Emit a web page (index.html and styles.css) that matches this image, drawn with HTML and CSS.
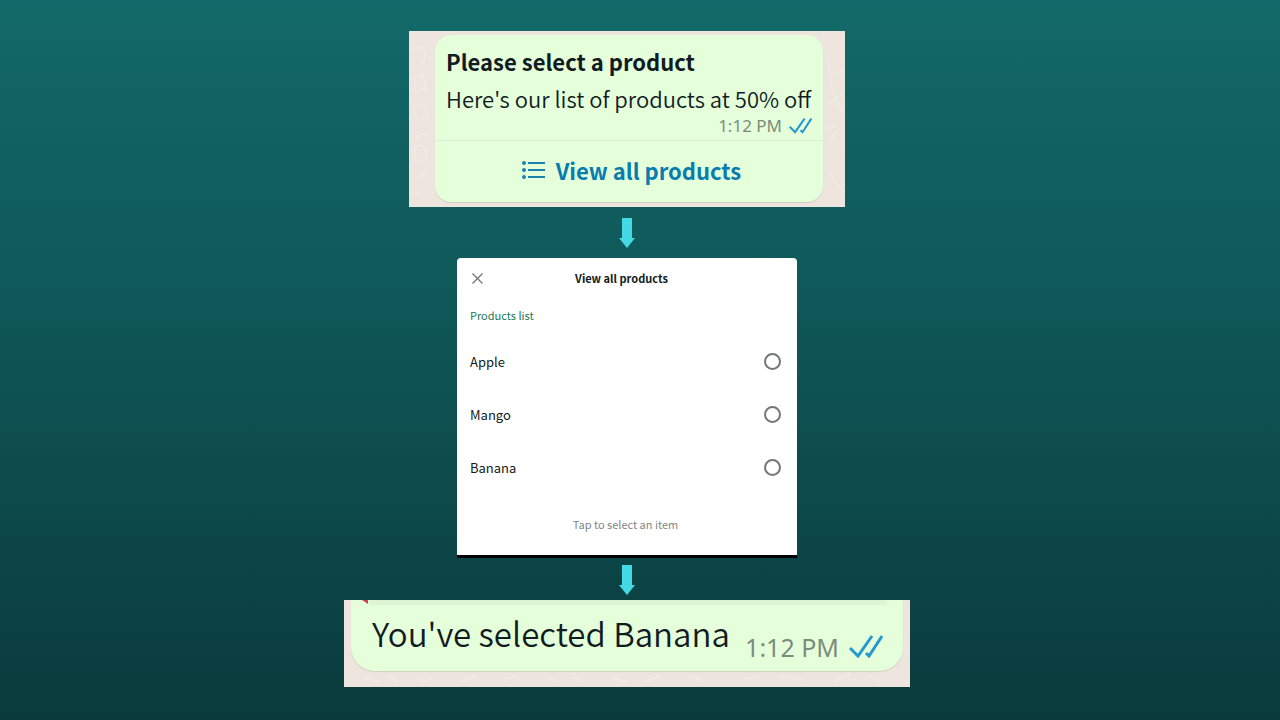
FILE: index.html
```html
<!DOCTYPE html>
<html lang="en">

<head>
  <meta charset="UTF-8">
  <meta name="viewport" content="width=device-width, initial-scale=1.0">
  <title>List message</title>
  <link rel="stylesheet" href="styles.css">
</head>

<body>
  <main class="flow">
    <!-- list message -->
    <section class="chat chat-list">
      <svg class="doodles" viewBox="0 0 436 176" aria-hidden="true">
        <path d="M3 20q8-8 12 0t-5 16M5 48l9-5 3 14-10 4zM4 78q8-9 14 0t-9 12zM6 106l12-4M5 118q7-9 12 2t-10 11zM6 148l12-5M4 160l8 6M418 24l5 34 10 22M423 44l10-4M420 72l12-8M417 98l12-5M418 138l16 22M420 112l8-12"/>
      </svg>
      <div class="bubble">
        <div class="bubble-body">
          <h1>Please select a product</h1>
          <p>Here's our list of products at 50% off</p>
          <div class="meta">
            <time>1:12 PM</time>
            <svg class="ticks" viewBox="0 0 34 23" aria-label="Read"><path d="M1 13l8 8L23 1M17 18l3 3L33 1"/></svg>
          </div>
        </div>
        <button class="view-all" type="button">
          <svg class="list-icon" viewBox="0 0 23 18" aria-hidden="true"><path d="M6 2h17M6 9h17M6 16h17"/><circle cx="2" cy="2" r="2"/><circle cx="2" cy="9" r="2"/><circle cx="2" cy="16" r="2"/></svg>
          View all products
        </button>
      </div>
    </section>

    <svg class="arrow" viewBox="0 0 16 30" aria-hidden="true"><path d="M3 0h10v20h3l-8 10-8-10h3z"/></svg>

    <!-- product picker -->
    <form class="sheet">
      <header>
        <button class="close" type="button" aria-label="Close">
          <svg viewBox="0 0 11 11"><path d="M.5.5l10 10M10.5.5l-10 10"/></svg>
        </button>
        <h2>View all products</h2>
      </header>
      <h3>Products list</h3>
      <label><span>Apple</span><input type="radio" name="product" value="apple"></label>
      <label><span>Mango</span><input type="radio" name="product" value="mango"></label>
      <label><span>Banana</span><input type="radio" name="product" value="banana"></label>
      <p class="hint">Tap to select an item</p>
    </form>

    <svg class="arrow" viewBox="0 0 16 30" aria-hidden="true"><path d="M3 0h10v20h3l-8 10-8-10h3z"/></svg>

    <!-- reply -->
    <section class="chat chat-reply">
      <svg class="doodles" viewBox="0 0 566 87" aria-hidden="true">
        <path d="M20 77l14 4M44 76l10 5M76 79q7 6 12-4M116 82l15-6M160 82q8-10 16-2M205 76l8 7M230 72l5 10M268 78l14 4M300 82l16-6M345 75l14 6M400 79l16-3M438 76l20 4M490 81l16-7M524 74l12 8"/>
      </svg>
      <div class="reply">
        <p>You've selected Banana</p>
        <div class="meta">
          <time>1:12 PM</time>
          <svg class="ticks" viewBox="0 0 34 23" aria-label="Read"><path d="M1 13l8 8L23 1M17 18l3 3L33 1"/></svg>
        </div>
      </div>
      <svg class="quote-corner" viewBox="0 0 6 4" aria-hidden="true"><path d="M0 0h6v4z"/></svg>
    </section>
  </main>
</body>

</html>
```
FILE: styles.css
```css
* {
  box-sizing: border-box;
}

body {
  margin: 0;
  min-height: 100vh;
  background: linear-gradient(#136969, #0f5657 45%, #0a3a3c);
  color: #111b21;
  font-family: "Noto Sans CJK SC", "Open Sans", sans-serif;
}

h1,
h2,
h3,
p {
  margin: 0;
}

button {
  border: 0;
  padding: 0;
  background: none;
  font-family: inherit;
  cursor: pointer;
}

svg {
  display: block;
}

.flow {
  display: flex;
  flex-direction: column;
  align-items: center;
  padding: 31px 26px 32px 0;
}

.chat {
  position: relative;
  max-width: 100%;
  background-color: #ede5de;
}

.chat-list {
  width: 436px;
  padding: 4px 22px 5px 26px;
}

.chat-reply {
  width: 566px;
  padding: 0 7px 16px;
}

.doodles {
  position: absolute;
  top: 0;
  left: 0;
  width: 100%;
  height: 100%;
  fill: none;
  stroke: #f5efea;
  stroke-width: 1;
}

.bubble,
.reply {
  position: relative;
  background-color: #e5ffdb;
  box-shadow: 0 1px 1px #cfd0c0;
}

.bubble {
  border-radius: 16px;
}

.bubble-body {
  padding: 8px 11px 4px;
  border-bottom: 1px solid #dcecdc;
}

.bubble h1 {
  font-size: 22px;
  line-height: 37px;
}

.bubble p {
  font-size: 22px;
  font-weight: 350;
  line-height: 36px;
  white-space: nowrap;
}

.meta {
  display: flex;
  align-items: center;
  justify-content: flex-end;
  color: #7c8c7c;
}

.meta time {
  font-family: "Noto Sans", sans-serif;
}

.bubble .meta {
  gap: 7px;
  font-size: 17px;
  line-height: 20px;
}

.ticks {
  width: 34px;
  fill: none;
  stroke: #2499d0;
  stroke-width: 3;
}

.bubble .ticks {
  width: 23px;
}

.view-all {
  display: flex;
  align-items: center;
  justify-content: center;
  gap: 11px;
  width: 100%;
  height: 61px;
  padding: 0 0 4px 5px;
  color: #087cad;
  font-size: 22px;
  font-weight: 700;
  line-height: 32px;
}

.list-icon {
  width: 23px;
  fill: #1a83b0;
}

.list-icon path {
  stroke: #1a83b0;
  stroke-width: 2;
}

.arrow {
  width: 16px;
  height: 30px;
  margin: 11px 0 10px;
  fill: #43d9e6;
}

.sheet {
  width: 340px;
  max-width: 100%;
  padding: 0 16px 15px 13px;
  border-bottom: 3px solid #000;
  border-radius: 4px 4px 0 0;
  background-color: #fff;
}

.sheet + .arrow {
  margin: 7px 0 5px;
}

.sheet header {
  display: grid;
  grid-template-columns: 16px 1fr 24px;
  align-items: center;
  height: 40px;
}

.close svg {
  width: 11px;
  margin-left: 2px;
  fill: none;
  stroke: #6f7578;
  stroke-width: 1.3;
}

.sheet h2 {
  font-size: 11px;
  text-align: center;
}

.sheet h3 {
  margin-bottom: 3px;
  color: #16795b;
  font-size: 11px;
  font-weight: 400;
  line-height: 34px;
}

.sheet label {
  display: flex;
  align-items: center;
  justify-content: space-between;
  height: 53px;
  font-size: 13px;
}

.sheet input {
  appearance: none;
  width: 17px;
  height: 17px;
  margin: 0;
  border: 2px solid #737578;
  border-radius: 50%;
}

.sheet input:checked {
  border-width: 5px;
  border-color: #16795b;
}

.hint {
  padding-top: 14px;
  color: #808785;
  font-size: 11px;
  line-height: 32px;
  text-align: center;
}

.reply {
  display: flex;
  justify-content: space-between;
  height: 71px;
  padding: 0 20px 0 21px;
  border-radius: 0 0 24px 24px;
}

.reply::before {
  content: "";
  position: absolute;
  top: 0;
  left: 18px;
  right: 16px;
  height: 5px;
  background-color: #def4d4;
}

.reply p {
  font-size: 33px;
  font-weight: 350;
  line-height: 66px;
  white-space: nowrap;
}

.reply .meta {
  gap: 10px;
  padding-top: 22px;
  font-size: 25px;
}

.quote-corner {
  position: absolute;
  top: 0;
  left: 18px;
  width: 6px;
  fill: #d63c60;
}
```
